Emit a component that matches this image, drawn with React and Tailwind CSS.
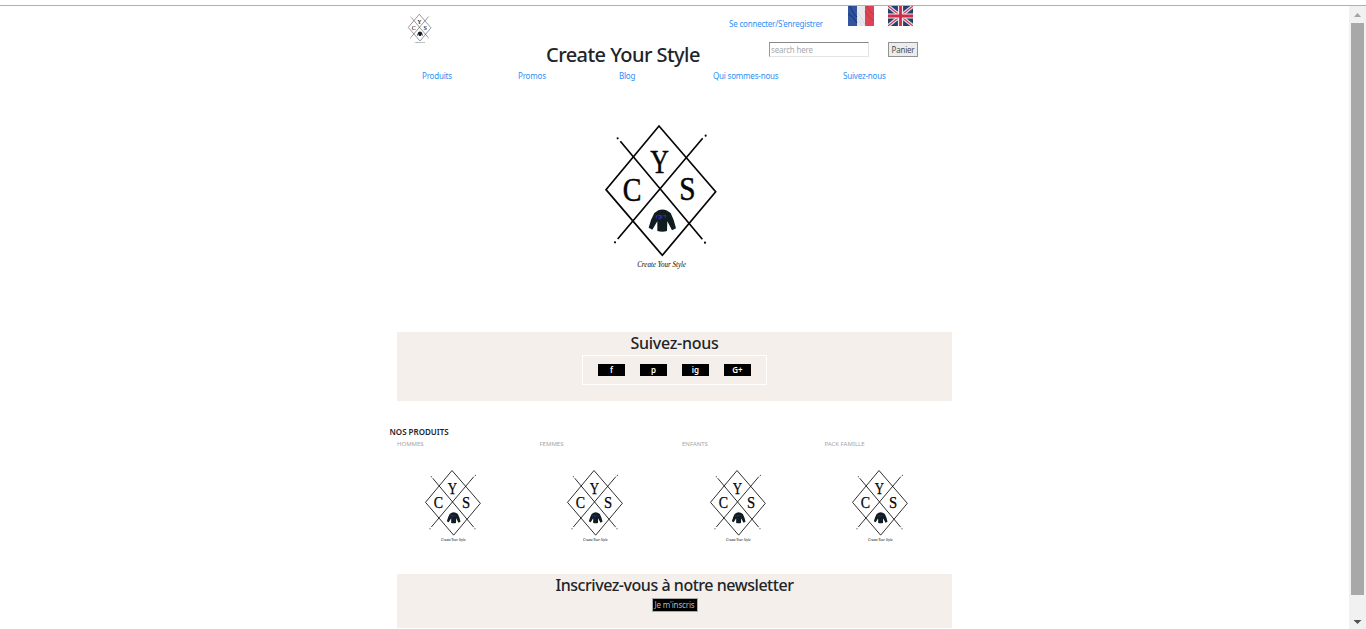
const ink = '#050505';

function Logo({ className, line = 5 }) {
  return (
    <svg viewBox="0 0 390 480" className={className} preserveAspectRatio="none">
      <g fill="none" stroke={ink} strokeWidth={line}>
        <path d="M192 33 L362 230 L202 421 L33 224 Z" />
        <path d="M76 79 L322 373 M323 70 L68 372" />
      </g>
      <g fill={ink}>
        <circle cx="68" cy="70" r="3.2" />
        <circle cx="332" cy="62" r="3.2" />
        <circle cx="60" cy="382" r="3.2" />
        <circle cx="330" cy="383" r="3.2" />
      </g>
      <g fill={ink} fontFamily="Liberation Serif, serif" textAnchor="middle">
        <g stroke={ink} strokeWidth="1.5">
          <text x="194" y="173" fontSize="98" textLength="56" lengthAdjust="spacingAndGlyphs">Y</text>
          <text x="111" y="258" fontSize="98" textLength="56" lengthAdjust="spacingAndGlyphs">C</text>
          <text x="277" y="256" fontSize="98" textLength="49" lengthAdjust="spacingAndGlyphs">S</text>
        </g>
        <text x="200" y="457" fontSize="23" fontStyle="italic" textLength="147" lengthAdjust="spacingAndGlyphs">Create Your Style</text>
      </g>
      <path
        d="M190 286 Q202 281 214 286 L227 294 Q238 315 243 340 L231 346 L217 319 L216 348 Q202 352 187 348 L187 319 L172 344 L161 338 Q167 313 178 294 Z"
        fill="#111c20"
      />
      <path d="M184 301 v9 M188 302 h8 v9 h-6 M200 301 v9 M205 302 h6 v7" stroke="#2c2b96" strokeWidth="4" fill="none" />
    </svg>
  );
}

function FrenchFlag() {
  return (
    <svg viewBox="0 0 26 20" className="h-5 w-[26px]">
      <path d="M0 0h9v20H0z" fill="#31549f" />
      <path d="M9 0h8v20H9z" fill="#e9e8ec" />
      <path d="M17 0h9v20h-9z" fill="#dc4453" />
      <path d="M0 8 Q5 10 9 17 M2 0 Q5 8 9 11" stroke="#213d7c" strokeWidth="1.3" fill="none" />
      <path d="M9 6 Q13 10 17 19 M10 13 L14 20" stroke="#d8d8df" fill="none" />
      <path d="M17 5 Q21 12 26 15 M19 0 Q22 7 26 9" stroke="#c43646" fill="none" />
    </svg>
  );
}

function BritishFlag() {
  return (
    <svg viewBox="0 0 25 20" className="h-5 w-[25px]">
      <path d="M0 0h25v20H0z" fill="#26406f" />
      <path d="M0 0 25 20M25 0 0 20" stroke="#e3e3eb" strokeWidth="3.4" />
      <path d="M0 0 25 20M25 0 0 20" stroke="#cf3e57" strokeWidth="1.2" />
      <path d="M12.5 0v20M0 10h25" stroke="#ece9ef" strokeWidth="5.2" />
      <path d="M12.5 0v20M0 10h25" stroke="#cf2c48" strokeWidth="2.8" />
    </svg>
  );
}

const link = 'block whitespace-nowrap text-[8px] leading-3 tracking-[-0.2px] text-[#2d90f5]';

function Header() {
  return (
    <header className="h-[106px]">
      <div className="flex h-[64px]">
        <div className="w-[149px] pl-[8.5px] pt-[6px]">
          <Logo className="h-[33px] w-[27px]" line={6} />
        </div>
        <h1 className="w-[183px] whitespace-nowrap pt-[37px] text-[20px] font-medium leading-6 tracking-[-0.55px]">
          Create Your Style
        </h1>
        <div className="w-[223px]">
          <div className="flex h-[36px]">
            <a className={`${link} w-[119px] pt-[12px]`}>Se connecter/S'enregistrer</a>
            <div className="w-10"><FrenchFlag /></div>
            <BritishFlag />
          </div>
          <div className="flex pl-10">
            <input
              placeholder="search here"
              className="mr-[19px] h-[15px] w-[100px] border border-[#e4e4e4] border-l-[#999] border-t-[#888] bg-white p-0 pl-px text-[8px] leading-3 tracking-[-0.2px] placeholder:text-[#aaa]"
            />
            <button className="h-[15px] w-[30px] whitespace-nowrap border border-[#929292] bg-[#ececec] text-[8px] leading-3 tracking-[-0.2px] text-[#4c4c4c]">
              Panier
            </button>
          </div>
        </div>
      </div>
      <nav className="flex pl-[25px]">
        <a className={`${link} w-[96px]`}>Produits</a>
        <a className={`${link} w-[101px]`}>Promos</a>
        <a className={`${link} w-[94px]`}>Blog</a>
        <a className={`${link} w-[130px]`}>Qui sommes-nous</a>
        <a className={link}>Suivez-nous</a>
      </nav>
    </header>
  );
}

function Social() {
  return (
    <section className="mt-[57px] flex h-[69px] flex-col items-center bg-[#f4efeb]">
      <h2 className="text-[16px] font-medium leading-[23px] tracking-[-0.27px]">Suivez-nous</h2>
      <div className="flex h-[30px] w-[185px] justify-center gap-[15px] border border-white pt-[8px]">
        {['f', 'p', 'ig', 'G+'].map((name) => (
          <a key={name} className="block h-3 w-[27px] bg-black text-center text-[8px] font-semibold leading-3 text-white">
            {name}
          </a>
        ))}
      </div>
    </section>
  );
}

function Products() {
  return (
    <section className="mt-[24px] h-[149px]">
      <h3 className="-ml-[7.5px] whitespace-nowrap text-[8px] font-semibold leading-[13px]">NOS PRODUITS</h3>
      <div className="grid grid-cols-[142.5px_142.5px_142.5px_127.5px]">
        {['HOMMES', 'FEMMES', 'ENFANTS', 'PACK FAMILLE'].map((name) => (
          <article key={name}>
            <p className="whitespace-nowrap text-[6px] leading-3 text-[#a5a5a5]">{name}</p>
            <Logo className="ml-[22.5px] mt-[15px] h-20 w-[65px]" />
          </article>
        ))}
      </div>
    </section>
  );
}

function Newsletter() {
  return (
    <section className="flex h-[54px] flex-col items-center bg-[#f4efeb]">
      <h2 className="whitespace-nowrap text-[16px] font-medium leading-[23px] tracking-[-0.46px]">Inscrivez-vous à notre newsletter</h2>
      <button className="mt-px h-[14px] w-[46px] whitespace-nowrap border border-[#aaa] bg-black text-[8px] leading-3 tracking-[-0.15px] text-[#b8b8b8]">
        Je m'inscris
      </button>
    </section>
  );
}

function Scrollbar() {
  return (
    <div className="flex w-[17px] flex-col items-center bg-[#f1f1f1]">
      <svg viewBox="0 0 17 17" className="h-[17px] w-[17px]"><path d="M5 11h7L8.5 7z" fill="#a3a3a3" /></svg>
      <div className="h-[572px] w-[13px] bg-[#a8a8a8]" />
      <svg viewBox="0 0 17 17" className="mt-auto h-[17px] w-[17px]"><path d="M4.5 8h8L8.5 12z" fill="#505050" /></svg>
    </div>
  );
}

export default function App() {
  return (
    <div className="flex h-[629px] flex-col overflow-hidden bg-white font-['Noto_Sans','Open_Sans',sans-serif] text-[#212529]">
      <div className="h-[6px] shrink-0 border-b border-[#b0b0b0]" />
      <div className="flex min-h-0 flex-1">
        <main className="flex-1 pl-[397px]">
          <div className="w-[555px]">
            <Header />
            <Logo className="ml-[198px] mt-[3px] h-[160px] w-[130px]" />
            <Social />
            <Products />
            <Newsletter />
          </div>
        </main>
        <Scrollbar />
      </div>
    </div>
  );
}
